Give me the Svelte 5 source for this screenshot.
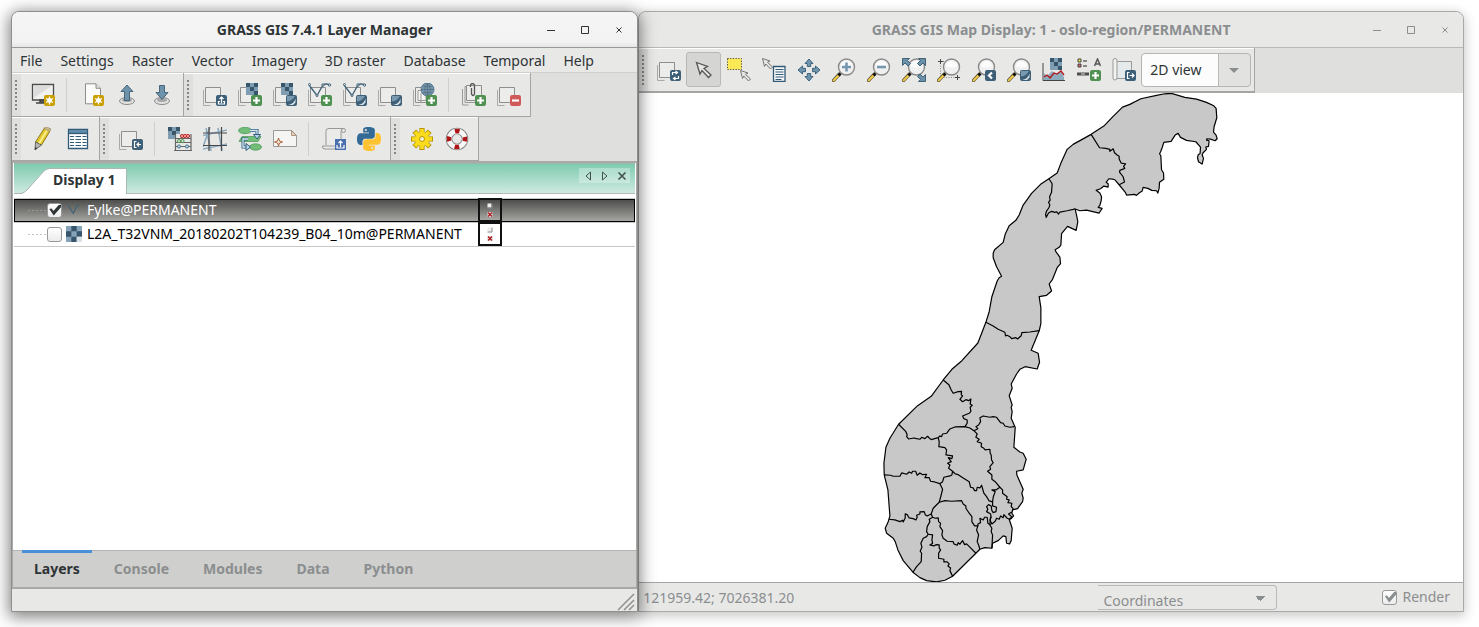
<script lang="ts">
  type Point = [number, number];

  // Boundary lists are digitised per sheet, three units to one map pixel.
  function sheet(x: number, y: number, list: string): Point[] {
    return list.trim().split(/\s+/).map((pair) => {
      const [a, b] = pair.split(',').map(Number);
      return [x + a / 3, y + b / 3] as Point;
    });
  }
  const north = (list: string) => sheet(980, 85, list);
  const middle = (list: string) => sheet(870, 310, list);
  const south = (list: string) => sheet(870, 410, list);
  const line = (points: Point[]) =>
    'M' + points.map(([a, b]) => a.toFixed(1) + ' ' + b.toFixed(1)).join('L');

  const outline = [
    ...north(`18,712 28,680 36,635 52,588 58,578 65,574 50,545 40,518 40,505 44,494 70,472 76,448 88,422 108,406 118,390 130,360
      155,325 182,298 207,281 232,264 243,235 262,193 280,178 334,148 372,123 400,94 428,66 450,58 483,41 530,31 555,26 575,25
      615,37 650,42 680,52 702,62 709,70 711,98 703,125 701,141 709,150 712,161 706,167 692,162 681,161 680,165 688,167 686,184
      678,186 680,193 670,203 667,209 671,220 667,237 656,230 653,218 655,210 661,205 662,186 648,170 620,166 602,157 595,145
      586,150 574,169 552,172 547,188 542,201 539,206 543,212 545,254 551,264 552,283 539,292 538,310 534,324 530,317 516,316
      504,310 490,307 487,318 478,324 470,331 464,328 440,330 436,321 418,299 406,285 398,282 387,281 379,292 385,296 385,306
      372,303 362,311 349,316 360,324 365,335 364,347 360,361 355,367 367,370 358,384 320,375 300,377 286,372 290,390 294,410
      289,436 263,424 245,446 243,480 238,487 226,494 228,500 240,516 242,536 232,548 218,583 208,597 215,618 200,631 178,635
      183,668 183,716 178,738`),
    ...middle(`508,62 484,121 505,130 509,157 502,177 466,170 450,178 440,192 424,222 427,235 418,257 427,285 424,292 427,305 424,325 436,352`),
    ...south(`436,55 432,112 450,126 460,130 469,148 460,180 440,184 441,195 460,238 456,250 460,265 458,275 443,296 428,300 426,310
      431,318 424,326 418,328 427,355 424,392 419,402 410,400 408,380 400,378 385,392 368,400 366,415 345,413 330,418 318,430
      248,499 225,511 200,516 170,512 150,503 129,487 100,452 84,420 76,395 70,385 50,370 46,355 55,335 60,318 54,240 43,195
      42,160 48,112 60,85 86,43`),
    ...middle('143,287 184,259 220,210 246,178 276,152 324,99 348,37'),
  ];

  const borders = [
    north(`334,148 359,188 378,190 390,193 390,199 400,191 404,203 412,210 418,214 418,222 424,234 437,236 431,244 435,250 420,256
      419,261 430,275 434,291 418,299`),
    north(`207,281 217,296 215,322 209,335 211,345 206,352 210,360 207,368 200,378 197,388 199,397 206,384 215,379 225,382 230,380
      236,387 240,381 262,377 280,373 286,371`),
    middle('348,37 370,48 385,58 405,67 407,78 412,76 420,80 425,86 438,83 443,87 454,77 456,68 480,66 508,62'),
    middle(`220,210 237,224 244,240 250,250 265,245 275,244 274,254 278,258 270,268 278,275 288,269 296,272 303,267 301,282 307,286
      301,292 303,304 298,310 278,318 282,326 292,330 292,340 285,350`),
    middle(`86,343 108,365 112,375 110,380 116,387 132,384 140,386 150,388 155,382 165,386 173,379 178,384 184,389 205,383 210,378
      215,380 218,372 230,370 240,357 255,351 285,350 300,354 312,362`),
    middle('433,350 420,352 405,348 400,340 392,338 380,322 370,320 360,322 340,318 330,323 332,335 326,345 318,350 324,356 312,362'),
    south(`43,195 62,196 70,199 90,199 95,189 110,193 118,186 125,190 128,184 137,184 142,196 150,189 158,194 170,193 165,203 178,203
      182,214 194,216 210,221`),
    south(`205,83 208,96 207,110 225,113 230,120 228,135 248,138 246,146 235,143 244,155 233,160 240,165 236,175 248,184 246,195 240,198
      222,202 218,215 210,221 218,238 212,262 208,277 190,295 184,312`),
    south('248,184 256,192 265,194 280,204 298,215 302,232 310,234 314,242 320,242 322,232 330,234 335,226 342,250 350,260 358,273 368,276'),
    south(`312,62 318,68 322,72 318,82 328,88 322,95 335,100 334,110 342,115 346,120 360,118 361,130 364,135 365,150 370,158 360,170
      362,178 353,184 366,195 366,208 376,215 390,232`),
    south(`390,232 378,240 366,240 376,245 370,262 368,276 368,288 380,292 378,305 370,308 366,302 364,288 356,284 350,290 354,298
      350,305 362,312 364,322 360,330`),
    south('390,232 398,240 398,250 412,260 410,268 418,270 414,278 426,280 424,290 430,296 428,300'),
    south(`208,277 225,272 245,274 275,272 280,282 288,288 288,295 298,310 306,320 306,335 314,348 324,348 320,360 326,375 322,395
      326,405 330,418`),
    south('324,348 324,342 332,338 330,325 340,330 344,322 352,322 354,340 362,345'),
    south('360,330 366,342 376,334 380,325 388,328 392,318 400,323 402,314 412,325 420,328 425,320 416,312 426,306'),
    south('362,320 360,345 366,355 364,365 368,375 366,415'),
    south(`57,328 75,330 90,335 98,331 100,336 106,324 106,312 112,314 118,324 130,326 138,330 142,322 140,316 150,312 150,306 163,305
      166,314 172,318 184,312 188,322 178,328 180,335 172,350 170,365 175,373 170,380 160,385 153,400 156,412 151,424 155,430 154,455
      140,470 129,487`),
    south(`188,322 196,325 205,324 206,335 212,340 210,350 218,362 216,375 220,385 232,394 250,395 252,402 262,406 265,398 270,403
      278,392 284,404 290,402 305,417 318,430`),
    south(`175,373 188,375 186,390 188,400 180,405 192,408 198,404 208,405 208,415 212,420 206,430 206,445 222,448 222,456 232,456
      238,462 234,468 242,474 240,482 248,499`),
  ];

  const menus = ['File', 'Settings', 'Raster', 'Vector', 'Imagery', '3D raster', 'Database', 'Temporal', 'Help'];

  const mainBars = [
    [
      ['display', '|', 'new', 'open', 'save'],
      ['multi', 'raster', 'rasterMisc', 'vector', 'vectorMisc', 'group', 'web', '|', 'overlay', 'remove'],
    ],
    [
      ['edit', 'table'],
      ['import', '|', 'calc', 'georectify', 'modeler', 'composer', '|', 'script', 'python'],
      ['settings', 'help'],
    ],
  ];
  const mapBar = ['render', 'pointer', 'select', 'query', 'pan', 'zoomIn', 'zoomOut', 'zoomExtent', 'zoomRegion', 'zoomBack', 'zoomMenu', 'analyze', 'decorate', 'saveFile'];

  const tabs = ['Layers', 'Console', 'Modules', 'Data', 'Python'];
  let activeTab = $state('Layers');

  let layers = $state([
    { name: 'Fylke@PERMANENT', kind: 'vectorLayer', on: true },
    { name: 'L2A_T32VNM_20180202T104239_B04_10m@PERMANENT', kind: 'rasterLayer', on: false },
  ]);
  let selected = $state(0);
</script>

{#snippet stack()}
  <path d="M.5 7v15.500h7" fill="none" stroke="#aaa" />
  <path d="M2.500 4.500h15v15h-15z" fill="#ececeb" stroke="#8f8f8f" />
{/snippet}

{#snippet checker(x: number, y: number)}
  <path d="M{x} {y}h12v12h-12z" fill="#7e9db3" />
  <path d="M{x} {y}h4v4h4v-4h4v4h-4v4h4v4h-4v-4h-4v-4h-4z" fill="#37566b" />
{/snippet}

{#snippet badge(kind: string)}
  {@const fill = kind === 'plus' ? '#4f9150' : kind === 'minus' ? '#d05a58' : kind === 'star' ? '#c9a000' : '#3d5f78'}
  <rect x="13" y="12" width="11" height="11" rx="2" {fill} />
  <g fill="none" stroke="#fff" stroke-width="1.200">
    {#if kind === 'plus'}
      <path d="M18.500 14v7M15 17.500h7" stroke-width="2.200" />
    {:else if kind === 'minus'}
      <path d="M15 17.500h7" stroke-width="2.200" />
    {:else if kind === 'star'}
      <path d="M18.500 13.500v8M15 15.500l7 4M15 19.500l7-4" />
      <circle cx="18.500" cy="17.500" r="1.800" fill="#fff" />
    {:else if kind === 'up'}
      <path d="M18.500 20v-6M16.500 16l2-2 2 2M17 18.500h-1.500v2.500h6v-2.500h-1.500" />
    {:else if kind === 'in'}
      <path d="M17.500 14.500h-2v6h2M22 17.500h-4M20 15.500l-2 2 2 2" />
    {:else if kind === 'out'}
      <path d="M17.500 14.500h-2v6h2M17.500 17.500h4.500M20 15.500l2 2-2 2" />
    {:else if kind === 'back'}
      <path d="M20 14.500l-3 3 3 3" stroke-width="2.200" />
    {:else if kind === 'refresh'}
      <path d="M15.500 17v-2.500h4.500M18.500 13l2 1.500-2 1.500M21.500 18v2.500h-4.500M18.500 19l-2 1.500 2 1.500" />
    {:else}
      <path d="M15 22q6-1 7.500-6.500v4l-2.500 2.500z" fill="#dce5ea" stroke="none" />
      <path d="M14 18.500q5-.5 8-5.500h-8z" fill="#7b9aaf" stroke="none" />
    {/if}
  </g>
{/snippet}

{#snippet nodes()}
  <path d="M1 2l8 10.500L15 2q2.500-2 7 0" fill="none" stroke="#3f6177" stroke-width="1.300" />
  <g fill="#dfe7ec" stroke="#3f6177"><circle cx="1.500" cy="1.500" r="1" /><circle cx="9" cy="12.500" r="1" /><circle cx="15" cy="2" r="1.200" /><circle cx="21.500" cy="2" r="1.200" /></g>
{/snippet}

{#snippet lens(sign: string)}
  <path d="M7.500 16L1.500 22.500" stroke="#6b6242" stroke-width="3.400" stroke-linecap="round" />
  <path d="M6.500 17.500L1.700 22.300" stroke="#f8cf45" stroke-width="1.800" stroke-linecap="round" />
  <path d="M6.500 15.500l2 2" stroke="#111" stroke-width="3" />
  <circle cx="14.500" cy="9" r="8" fill="#f0f0f0" stroke="#8a8a8a" stroke-width="1.400" />
  <path d="M9 8.500a5.500 5.500 0 0 1 11 0q-5.500 2-11 0z" fill="#fff" opacity=".8" />
  {#if sign}<path d={sign === '+' ? 'M14.500 4.500v9M10 9h9' : 'M10 9h9'} stroke="#7597ae" stroke-width="2.600" />{/if}
{/snippet}

{#snippet icon(name: string)}
  <svg class="icon" viewBox="0 0 24 24" aria-hidden="true">
    {#if name === 'display'}
      <path d="M1.500 1.500h21v15.500h-21z" fill="#f1f1f0" stroke="#4b4b4b" stroke-width="1.300" />
      <path d="M2.500 2.500h19L2.500 15z" fill="#dcdcdc" /><path d="M9 17h6v3h-6zM5 20h9" stroke="#444" stroke-width="1.500" fill="#555" />
      {@render badge('star')}
    {:else if name === 'new'}
      <path d="M5.500 .8h10.500l4.500 4.500v15.500h-15z" fill="#fbfbfb" stroke="#8d8d8d" /><path d="M16 .8v4.500h4.500" fill="#ddd" stroke="#8d8d8d" />
      {@render badge('star')}
    {:else if name === 'open' || name === 'save'}
      <ellipse cx="12" cy="18" rx="7.500" ry="3.500" fill="#e2e2e1" stroke="#8b8b8b" />
      <ellipse cx="12" cy="17" rx="5" ry="2" fill="#a9a9a9" />
      <path d={name === 'open' ? 'M12 2l6 6.500h-3.500v9h-5v-9H6z' : 'M9.500 2.500h5v7H18l-6 7-6-7h3.500z'} fill="#6f93ab" stroke="#3d5c71" stroke-width=".9" />
    {:else if name === 'multi'}
      {@render stack()}{@render badge('up')}
    {:else if name === 'raster'}
      {@render stack()}{@render checker(8, 0)}{@render badge('plus')}
    {:else if name === 'rasterMisc'}
      {@render stack()}{@render checker(8, 0)}{@render badge('menu')}
    {:else if name === 'vector'}
      {@render stack()}{@render nodes()}{@render badge('plus')}
    {:else if name === 'vectorMisc'}
      {@render stack()}{@render nodes()}{@render badge('menu')}
    {:else if name === 'group'}
      {@render stack()}{@render badge('menu')}
    {:else if name === 'web'}
      {@render stack()}
      <path d="M5 7.500h8v10h-8zM8 10v9" fill="#f4f4f3" stroke="#999" />
      <circle cx="14.500" cy="6.500" r="6.500" fill="#7896ab" stroke="#567a92" />
      <path d="M14.500 0v13M8 6.500h13M10 3q4.500 1.500 9 0M10 10q4.500-1.500 9 0M14.500 0q-6 6.500 0 13q6-6.500 0-13" fill="none" stroke="#4a6c83" stroke-width=".7" />
      {@render badge('plus')}
    {:else if name === 'overlay'}
      <path d="M.5 6v16h6M3 3.500h2M3 3.500v16h10" fill="none" stroke="#999" />
      <path d="M4.500 2.500h15v15h-15z" fill="#ececeb" stroke="#8f8f8f" />
      <path d="M8.500 4v-2q2-3 4 0v9q-1.500 3-3 0V5" fill="none" stroke="#555" stroke-width="1.300" />
      {@render badge('plus')}
    {:else if name === 'remove'}
      {@render stack()}{@render badge('minus')}
    {:else if name === 'edit'}
      <path d="M4.500 15L13.500 1l5.500 3-8.500 14z" fill="#e2c62c" stroke="#8d7a1c" />
      <path d="M7 16.200l8.500-14 1.700 1-8.500 14z" fill="#fbee8c" /><path d="M13 1.500l5.500 3 1.500-2.500-5.500-2.500z" fill="#c9bc8b" stroke="#98875a" stroke-width=".7" />
      <path d="M4.500 15l6 3-6.500 5z" fill="#b5b5b0" stroke="#555" stroke-width=".8" /><path d="M4.200 20l2 1-2.500 2z" fill="#333" />
    {:else if name === 'table'}
      <path d="M2.500 2.500h19v19h-19z" fill="#fff" stroke="#315a76" stroke-width="1.300" /><path d="M3 3h18v3.500H3z" fill="#5f8cac" /><path d="M2.500 6.500h19" stroke="#315a76" stroke-width="1.300" />
      <path d="M4 9.500h4M9.500 9.500h5.500M16.500 9.500h4M4 12.500h4M9.500 12.500h5.500M16.500 12.500h4M4 15.500h4M9.500 15.500h5.500M16.500 15.500h4M4 18.500h4M9.500 18.500h5.500M16.500 18.500h4" stroke="#315a76" />
    {:else if name === 'import'}
      {@render stack()}{@render badge('in')}
    {:else if name === 'calc'}
      {@render checker(0, 0)}
      <path d="M7 7h16v16H7z" fill="#e9e9e8" /><path d="M7.500 7v17M23 7v17M7 11.500h16M7 15.500h16M7 19.500h16M6 23.500h18" stroke="#656565" stroke-width="1.200" fill="none" />
      <g stroke-width=".9"><g fill="#f4a7a5" stroke="#b3191b"><circle cx="14" cy="9" r="1.600" /><circle cx="17" cy="9" r="1.600" /><circle cx="20" cy="9" r="1.600" /></g>
      <g fill="#c7e2c4" stroke="#4e9150"><circle cx="11" cy="14" r="1.600" /><circle cx="14.500" cy="14" r="1.600" /></g>
      <g fill="#b8cfdd" stroke="#3d6a87"><circle cx="11" cy="19.500" r="1.600" /><circle cx="19" cy="19.500" r="1.600" /></g></g>
    {:else if name === 'georectify'}
      <path d="M0 8.500L24 3M0 22l24-5M3 1l5 23M15 1l4 23M0 20L7 0" stroke="#8eacc1" stroke-width="1.600" fill="none" />
      <path d="M0 6h24M0 18.500h24M6 0v24M18.500 0v24" stroke="#484848" stroke-width="1.200" fill="none" />
    {:else if name === 'modeler'}
      <g fill="#72bd77" stroke="#479353" stroke-width=".7"><ellipse cx="7" cy="3.500" rx="6.500" ry="3.200" /><path d="M4 9.500h19l-3 5H1z" /><ellipse cx="17.500" cy="20" rx="6" ry="3.200" /></g>
      <g fill="none" stroke="#315f80" stroke-width="3"><path d="M12 3.500h7v5M10 12H5v8h4" /></g>
      <g fill="none" stroke="#d6e8f3" stroke-width="1.300"><path d="M12 3.500h7v5M10 12H5v8h4" /></g>
      <path d="M15.500 7.500h7L19 12zM8 16.500v7l4.500-3.500z" fill="#b9d4e6" stroke="#315f80" />
    {:else if name === 'composer'}
      <path d="M.5 3.500h18l5 5v11h-23z" fill="#f5f5f4" stroke="#9a9a9a" /><path d="M18.500 3.500v5h5z" fill="#e5caae" stroke="#9a8571" stroke-width=".8" />
      <path d="M5.500 11l1 3 3 1-3 1-1 3-1-3-3-1 3-1z" fill="#f3e7df" stroke="#a4582c" stroke-width=".9" />
    {:else if name === 'script'}
      <path d="M4 18V4q0-2.500 3-2.500h15q-3 0-3 3V22H3q-3 0-2.500-3H14" fill="#ebebea" stroke="#979797" /><circle cx="21.500" cy="3.500" r="2" fill="#e5e5e4" stroke="#979797" />
      <path d="M13 12h11v11H13z" fill="#4a6fae" /><path d="M18.500 20v-6M16.500 16l2-2 2 2M15 18v3h7v-3" fill="none" stroke="#fff" stroke-width="1.200" />
    {:else if name === 'python'}
      <path d="M14.250.18l.9.2.73.26.59.3.45.32.34.34.25.34.16.33.1.3.04.26.02.2-.01.13V8.500l-.05.63-.13.55-.21.46-.26.38-.3.31-.33.25-.35.19-.35.14-.33.1-.3.07-.26.04-.21.02H8.770l-.69.05-.59.14-.5.22-.41.27-.33.32-.27.35-.2.36-.15.37-.1.35-.07.32-.04.27-.02.21v3.060H3.170l-.21-.03-.28-.07-.32-.12-.35-.18-.36-.26-.36-.36-.35-.46-.32-.59-.28-.73-.21-.88-.14-1.050-.05-1.230.06-1.220.16-1.040.24-.87.32-.71.36-.57.4-.44.42-.33.42-.24.4-.16.36-.1.32-.05.24-.01h.16l.06.01h8.160v-.83H6.180l-.01-2.750-.02-.37.05-.34.11-.31.17-.28.25-.26.31-.23.38-.2.44-.18.51-.15.58-.12.64-.1.71-.06.77-.04.84-.02 1.270.05z" fill="#346a96" />
      <path d="M21.040 6.110l.28.06.32.12.35.18.36.27.36.35.35.47.32.59.28.73.21.88.14 1.040.05 1.230-.06 1.230-.16 1.040-.24.86-.32.71-.36.57-.4.45-.42.33-.42.24-.4.16-.36.09-.32.05-.24.02-.16-.01h-8.220v.82h5.840l.01 2.760.02.36-.05.34-.11.31-.17.29-.25.25-.31.24-.38.2-.44.17-.51.15-.58.13-.64.09-.71.07-.77.04-.84.01-1.270-.04-1.070-.14-.9-.2-.73-.25-.59-.3-.45-.33-.34-.34-.25-.34-.16-.33-.1-.3-.04-.25-.02-.2.01-.13v-5.340l.05-.64.13-.54.21-.46.26-.38.3-.32.33-.24.35-.2.35-.14.33-.1.3-.06.26-.04.21-.02.13-.01h5.840l.69-.05.59-.14.5-.21.41-.28.33-.32.27-.35.2-.36.15-.36.1-.35.07-.32.04-.28.02-.21V6.070h2.090l.14.01z" fill="#ffc331" />
      <circle cx="8.800" cy="3" r="1.100" fill="#e8e8e7" /><circle cx="15.200" cy="21" r="1.100" fill="#e8e8e7" />
    {:else if name === 'settings'}
      <g stroke="#b99600" stroke-width="5.200">
        {#each [0, 45, 90, 135] as turn}<path d="M12 1v22" transform="rotate({turn} 12 12)" />{/each}
      </g>
      <g stroke="#fbdc1c" stroke-width="3.600">
        {#each [0, 45, 90, 135] as turn}<path d="M12 2v20" transform="rotate({turn} 12 12)" />{/each}
      </g>
      <circle cx="12" cy="12" r="7" fill="#fbdc1c" /><circle cx="12" cy="12" r="2.500" fill="#f1efd8" stroke="#b99600" />
    {:else if name === 'help'}
      <circle cx="12" cy="12" r="8" fill="none" stroke="#858585" stroke-width="6.600" /><circle cx="12" cy="12" r="8" fill="none" stroke="#f8f8f8" stroke-width="4.800" />
      <circle cx="12" cy="12" r="8" fill="none" stroke="#b11616" stroke-width="4.400" stroke-dasharray="4.600 7.966" stroke-dashoffset="2.300" />
    {:else if name === 'render'}
      {@render stack()}{@render badge('refresh')}
    {:else if name === 'pointer'}
      <path d="M4.500 4.500l11 4-3.500 2 7 6.500-2.500 2.500-6.500-7-2 3.500z" fill="#e6e6e5" stroke="#555" stroke-width="1.300" />
    {:else if name === 'select'}
      <path d="M.5 .5h14v11h-14z" fill="#fbe857" stroke="#4e4a22" stroke-dasharray="1.200 1.500" />
      <path d="M13.500 12.500l7.500 2.500-2.500 1.300 5 4.700-2 2-4.700-5-1.300 2.500z" fill="#e6e6e5" stroke="#777" />
    {:else if name === 'query'}
      <path d="M.5 .5l7.500 2.500-2.500 1.300 5 4.700-2 2-4.700-5-1.300 2.500z" fill="#e6e6e5" stroke="#777" />
      <path d="M11.500 8.500h11.500v15H11.500z" fill="#f7f9fa" stroke="#315a76" stroke-width="1.300" /><path d="M13.500 11.500h8M13.500 14h8M13.500 16.500h8M13.500 19h8M13.500 21.500h6" stroke="#315a76" />
    {:else if name === 'pan'}
      <g fill="#6f96af" stroke="#3f637a">
        {#each [0, 90, 180, 270] as turn}<path d="M12 1l4 4.500h-2.300v3h-3.400v-3H8z" transform="rotate({turn} 12 12)" />{/each}
      </g>
    {:else if name === 'zoomIn'}
      {@render lens('+')}
    {:else if name === 'zoomOut'}
      {@render lens('-')}
    {:else if name === 'zoomExtent'}
      {@render lens('')}
      <g fill="#6b91a9" stroke="#36586e" stroke-width=".9"><path d="M.5 .5h7l-2 2 3 3-2.500 2.500-3-3-2.500 2.500z" /><path d="M23.500 .5h-7l2 2-3 3 2.500 2.500 3-3 2.500 2.500z" /><path d="M23.500 23.500h-7l2-2-3-3 2.500-2.500 3 3 2.500-2.500z" /></g>
    {:else if name === 'zoomRegion'}
      <path d="M3.500 5v14.500H21M6 3.500h14" stroke="#888" stroke-dasharray="1 1.500" fill="none" />
      {@render lens('')}<path d="M1 3.500h5M3.500 1v5M18 19.500h5M20.500 17v5" stroke="#444" />
    {:else if name === 'zoomBack'}
      {@render lens('')}{@render badge('back')}
    {:else if name === 'zoomMenu'}
      {@render lens('')}{@render badge('menu')}
    {:else if name === 'analyze'}
      {@render checker(8, 0)}
      <path d="M2 22V15l3 3 5-5 4 3 5-2 3 5v3z" fill="#8cabbd" /><path d="M1 5v17.500h22" stroke="#444" fill="none" /><path d="M2 19l3-2 3 3 4-5 3 1 4-3 3 4" stroke="#b0161c" stroke-width="1.300" fill="none" />
    {:else if name === 'decorate'}
      <path d="M1 1h3v3H1z" fill="#f4e93c" stroke="#444" /><path d="M1 6h3v3H1z" fill="#d3625d" stroke="#444" /><path d="M6 3h4M6 8h4" stroke="#666" stroke-width="1.300" />
      <path d="M0 16h12" stroke="#4d4d4d" stroke-width="3" /><path d="M4 16h4" stroke="#ddd" /><path d="M17.500 8L20.500 1l3 7M18.500 6h4" fill="none" stroke="#585858" stroke-width="1.500" />
      {@render badge('plus')}
    {:else if name === 'saveFile'}
      <path d="M3 3.500h16.500v17H3z" fill="#e5eaed" stroke="#9a9a9a" /><path d="M1 2.500q0-2 2-2t2 2V20q0 2-2 2t-2-2z" fill="#f1f1f0" stroke="#999" />
      {@render badge('out')}
    {:else if name === 'vectorLayer'}
      <path d="M3 5l8 12 5-11 4-1" fill="none" stroke="#3f6177" stroke-width="1.600" />
    {:else if name === 'rasterLayer'}
      <path d="M0 0h24v24H0z" fill="#86a3b7" /><path d="M8 0h8v8H8zM0 8h8v8H0zM16 8h8v8h-8zM8 16h8v8H8z" fill="#37566b" /><path d="M16 16h8v8h-8z" fill="#d8e1e7" />
    {/if}
  </svg>
{/snippet}

{#snippet titlebar(title: string)}
  <header class="titlebar">
    <h1>{title}</h1>
    <div class="controls">
      <button aria-label="Minimise"><svg viewBox="0 0 10 10"><path d="M1 5.500h8" /></svg></button>
      <button aria-label="Maximise"><svg viewBox="0 0 10 10"><path d="M1.500 1.500h7v7h-7z" /></svg></button>
      <button aria-label="Close"><svg viewBox="0 0 10 10"><path d="M2.500 2.500l5 5M7.500 2.500l-5 5" /></svg></button>
    </div>
  </header>
{/snippet}

<main class="desktop">
  <section class="window manager">
    {@render titlebar('GRASS GIS 7.4.1 Layer Manager')}
    <nav class="menubar">
      {#each menus as menu}<button>{menu}</button>{/each}
    </nav>

    <div class="bars">
      {#each mainBars as row}
        <div class="row">
          {#each row as bar}
            <div class="toolbar" role="toolbar">
              {#each bar as item}
                {#if item === '|'}<span class="sep"></span>{:else}<button class="tool" aria-label={item}>{@render icon(item)}</button>{/if}
              {/each}
            </div>
          {/each}
        </div>
      {/each}
    </div>

    <div class="book">
      <div class="strip">
        <button class="display-tab">
          <svg viewBox="0 0 28 26"><path d="M0 26Q3 25 6 22L22 4Q25 1 28 1V26z" fill="#fff" /><path d="M0 25.500Q3 25 6 22L22 4Q25 .5 28 .5" fill="none" stroke="#a9b8b1" /></svg><span>Display 1</span>
        </button>
        <div class="pager">
          <button aria-label="Previous"><svg viewBox="0 0 10 10"><path d="M7.500 1v8l-4.500-4z" /></svg></button>
          <button aria-label="Next"><svg viewBox="0 0 10 10"><path d="M2.500 1v8l4.500-4z" /></svg></button>
          <button aria-label="Close display"><svg viewBox="0 0 10 10"><path d="M1.500 1.500l7 7M8.500 1.500l-7 7" stroke-width="1.600" /></svg></button>
        </div>
      </div>
      <div class="tree">
        {#each layers as layer, i}
          <div class="layer" class:selected={selected === i}>
            <div class="entry">
              <span class="branch"></span>
              <input type="checkbox" bind:checked={layer.on} aria-label="Show {layer.name}" />
              {@render icon(layer.kind)}
              <button class="name" onclick={() => (selected = i)}>{layer.name}</button>
            </div>
            <button class="props" aria-label="Layer properties">
              <svg viewBox="0 0 6 14"><path d="M.5 .5h4v4h-4z" fill="#eee" /><path d="M5 .5v4.500H.5" stroke="#888" fill="none" /><path d="M.5 9h5v5h-5z" fill="#ddd" /><path d="M1 9.500l4 4M5 9.500l-4 4" stroke="#b0161c" stroke-width="1.300" /></svg>
            </button>
          </div>
        {/each}
      </div>
      <div class="tabs">
        {#each tabs as tab}
          <button class:active={activeTab === tab} onclick={() => (activeTab = tab)}>{tab}</button>
        {/each}
      </div>
    </div>
    <footer class="status">
      <svg class="sizer" viewBox="0 0 18 18"><path d="M1 17L17 1M7 17L17 7M12 17l5-5" /></svg>
    </footer>
  </section>

  <section class="window map">
    {@render titlebar('GRASS GIS Map Display: 1 - oslo-region/PERMANENT')}
    <div class="bars">
      <div class="toolbar" role="toolbar">
        {#each mapBar as item}
          <button class="tool" class:pressed={item === 'pointer'} aria-label={item}>{@render icon(item)}</button>
        {/each}
        <div class="choice">
          <select aria-label="View mode"><option>2D view</option><option>3D view</option></select>
        </div>
      </div>
    </div>
    <svg class="canvas" viewBox="639 93 824 489" role="img" aria-label="Counties of Norway">
      <path d="{line(outline)}Z" fill="#c8c8c8" />
      {#each borders as border}<path d={line(border)} />{/each}
    </svg>
    <footer class="status">
      <output>121959.42; 7026381.20</output>
      <select class="mode" aria-label="Status bar mode" disabled><option>Coordinates</option></select>
      <label class="render"><input type="checkbox" checked disabled />Render</label>
    </footer>
  </section>
</main>

<style>
  :global(body) { margin: 0; background: #fff; }
  .desktop {
    box-sizing: border-box; min-height: 100vh; display: flex; padding: 11px 15px 15px 11px;
    font: 14px/20px "Noto Sans", "Open Sans", sans-serif; color: #2e3436; overflow: hidden;
  }
  button, select, input { font: inherit; color: inherit; margin: 0; padding: 0; border: 0; background: none; }
  .window {
    box-sizing: border-box; display: flex; flex-direction: column; min-width: 0;
    border: 1px solid #8e8e8c; border-radius: 8px 8px 0 0; background: #e8e8e7;
  }
  .manager { flex: 627 1 0; position: relative; z-index: 1; box-shadow: 0 3px 16px 2px rgba(0, 0, 0, .5); }
  .map { flex: 826 1 0; border-color: #a9a9a7; box-shadow: 0 3px 12px 1px rgba(0, 0, 0, .22); }

  .titlebar {
    display: grid; grid-template-columns: 1fr auto 1fr; align-items: center; height: 35px;
    border-bottom: 1px solid #999997; border-radius: 7px 7px 0 0; background: linear-gradient(#f5f5f5, #f2f2f2 85%, #e6e6e6);
  }
  h1 { grid-column: 2; margin: 0; font-size: 14px; line-height: 20px; font-weight: 700; white-space: nowrap; }
  .controls { display: flex; justify-content: flex-end; padding-right: 1px; }
  .controls button { width: 34px; height: 24px; }
  .controls svg { width: 10px; height: 10px; fill: none; stroke: #2e3436; display: block; margin: 0 auto; }
  .map .titlebar { background: #e8e8e7; border-color: #b9b9b7; color: #8b8e8f; }
  .map .controls svg { stroke: #8b8e8f; }

  .menubar { display: flex; gap: 18px; height: 22px; padding: 2px 8px 0; border-bottom: 1px solid #cfcfcd; }
  .menubar button { white-space: nowrap; }

  .bars { background: #dfdfde; }
  .row { display: flex; }
  .toolbar {
    box-sizing: border-box; display: flex; align-items: center; width: max-content; height: 44px; padding: 1px 4px 0 13px;
    border: solid #a5a5a3; border-width: 0 1px 1px 0; box-shadow: inset 0 1px #fff;
    background: repeating-linear-gradient(#858583 0 2px, transparent 2px 4px) 3px 7px / 2px 32px no-repeat, linear-gradient(#dfdfde, #dfdfde) 0 1px / 9px 100% no-repeat, #e8e8e7;
  }
  .tool { width: 35px; height: 35px; display: grid; place-items: center; border-radius: 3px; }
  .tool.pressed { box-sizing: border-box; border: 1px solid #b8b8b6; background: #d5d5d4; }
  .icon { width: 24px; height: 24px; fill: none; display: block; }
  .sep { box-sizing: border-box; width: 8px; height: 34px; border-left: 1px solid #cfcfcd; margin-left: 6px; }

  .book { flex: 1; display: flex; flex-direction: column; padding: 0 1px; border: solid #a9a9a7; border-width: 2px 1px; background: #fff; }
  .strip { display: flex; justify-content: space-between; height: 29px; padding-left: 7px; background: linear-gradient(#7fcbb0, #cfeae1); border-top: 1px solid #9bb8ad; border-bottom: 1px solid #b7b7b5; }
  .display-tab { display: flex; align-self: flex-end; height: 26px; margin-bottom: -1px; font-weight: 700; }
  .display-tab svg { width: 28px; height: 26px; }
  .display-tab span { box-sizing: border-box; height: 26px; padding: 1px 10px 0 4px; background: #fff; border: solid #a9b8b1; border-width: 1px 1px 0 0; }
  .pager { display: flex; align-items: center; height: 15px; margin: 4px 5px 0 0; background: rgba(255, 255, 255, .3); }
  .pager button { width: 17px; height: 15px; display: grid; place-items: center; }
  .pager svg { width: 10px; height: 10px; fill: none; stroke: #43524c; }

  .tree { flex: 1; margin-top: 4px; border-top: 1px solid #c8c8c6; }
  .layer { display: grid; grid-template-columns: 464px 24px 1fr; height: 23px; border-bottom: 1px solid #c8c8c6; color: #000; }
  .layer.selected { color: #fff; background: linear-gradient(#4a4a48, #a8a8a5); box-shadow: inset 0 0 0 1px #000; }
  .entry { display: flex; align-items: center; min-width: 0; padding: 0 0 1px 14px; }
  .branch { width: 18px; margin-right: 1px; height: 1px; background: repeating-linear-gradient(90deg, #c4c4c2 0 2px, transparent 2px 4px); }
  .selected .branch { opacity: .4; }
  .entry .icon { width: 16px; height: 16px; margin: 0 4px 0 4px; flex: none; }
  .name { white-space: nowrap; margin-left: 1px; }
  .props { display: grid; place-items: center; height: 24px; margin-top: -1px; border: 2px solid #111; background: #fff; }
  .selected .props { background: linear-gradient(#4a4a48, #a8a8a5); }
  .props svg { width: 6px; height: 14px; }

  input[type="checkbox"] {
    appearance: none; box-sizing: border-box; flex: none; width: 15px; height: 15px; border: 1px solid #999; border-radius: 3px;
    background: linear-gradient(#fff, #ececec); display: grid; place-items: center;
  }
  input[type="checkbox"]:checked::before {
    content: ""; width: 13px; height: 12px; background: #2e3436;
    clip-path: polygon(10% 42%, 28% 38%, 42% 58%, 82% 8%, 100% 8%, 100% 28%, 44% 96%);
  }
  input:disabled:checked::before { background: #8b8e8f; }

  .tabs { display: flex; gap: 10px; height: 36px; margin: 0 -1px; padding-left: 9px; background: #cfcfcd; border-top: 1px solid #b5b5b3; }
  .tabs button { padding: 0 12px; font-weight: 700; color: #8b8e8f; }
  .tabs .active { color: #2e3436; box-shadow: inset 0 2px #4a90d9, 0 -1px #4a90d9; }

  .status { display: flex; align-items: center; height: 22px; color: #8b8e8f; }
  .sizer { width: 18px; height: 18px; margin: 4px 2px 0 auto; fill: none; stroke: #8f8f8d; stroke-width: 1.500; }

  .map .toolbar { height: 45px; padding: 0 3px 0 12px; border-bottom-width: 2px; }
  .choice { position: relative; }
  .choice select {
    appearance: none; box-sizing: border-box; display: block; width: 110px; height: 34px; padding-left: 8px; border: 1px solid #b5b5b3; border-radius: 4px;
    background: linear-gradient(90deg, #fcfcfc 76px, #b9b9b7 76px 77px, #e2e2e1 77px);
  }
  .choice::after { content: ""; position: absolute; right: 12px; top: 15px; border: 5px solid transparent; border-top-color: #8b8e8f; border-bottom: 0; }
  .canvas { flex: 1 1 0; min-height: 0; width: 100%; display: block; background: #fff; fill: none; stroke: #000; stroke-width: 1.200; stroke-linejoin: round; }
  .map .status { height: 28px; padding-left: 4px; border-top: 1px solid #a5a5a3; }
  output { flex: 1; padding-top: 2px; }
  .mode {
    appearance: none; box-sizing: border-box; width: 179px; height: 25px; padding: 5px 0 0 5px; border: 1px solid #b9b9b7; border-left: 0; border-radius: 0 4px 4px 0; opacity: 1;
    background: linear-gradient(45deg, transparent 50%, #8b8e8f 50%) 157px 10px / 5px 5px no-repeat, linear-gradient(-45deg, transparent 50%, #8b8e8f 50%) 162px 10px / 5px 5px no-repeat;
  }
  .render { display: flex; align-items: center; gap: 5px; margin: 0 13px 0 105px; }
</style>
